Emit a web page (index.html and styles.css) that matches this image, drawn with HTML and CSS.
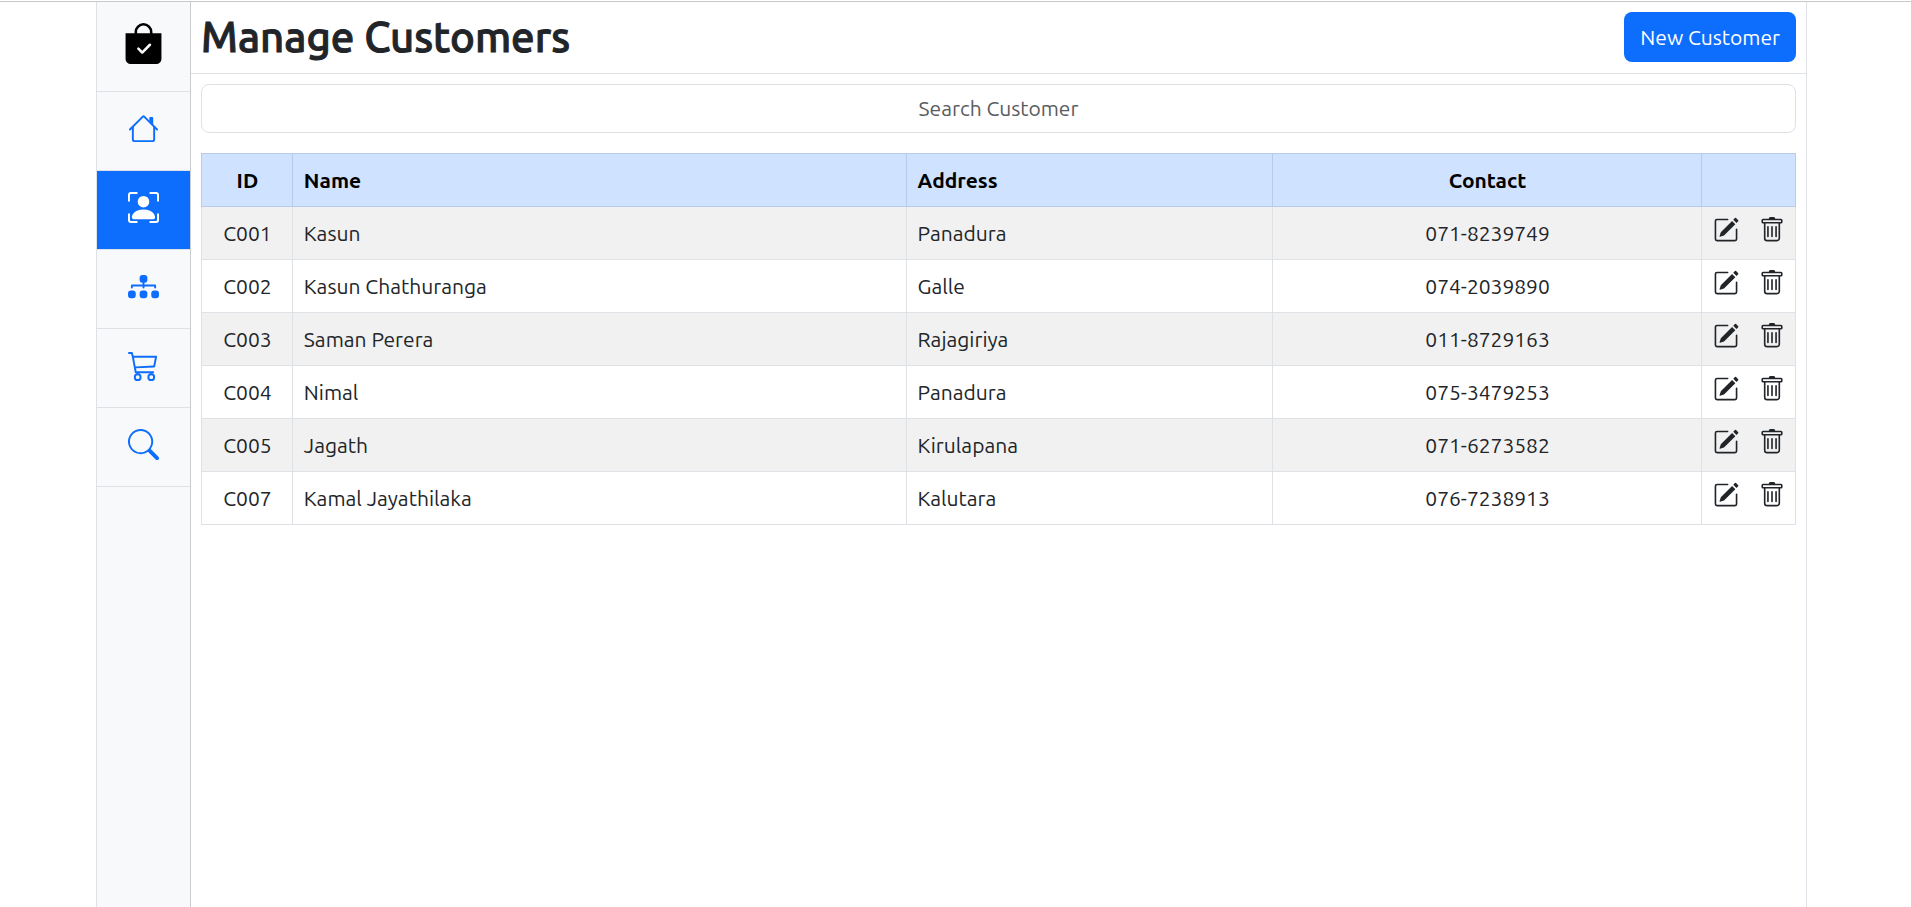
FILE: index.html
```html
<!DOCTYPE html>
<html lang="en">
<head>
<meta charset="utf-8">
<title>Manage Customers</title>
<link rel="stylesheet" href="styles.css">
</head>
<body>
<svg class="sprite" aria-hidden="true">
  <symbol id="pencil" viewBox="0 0 16 16"><path d="M15.502 1.94a.5.5 0 0 1 0 .706L14.459 3.69l-2-2L13.502.646a.5.5 0 0 1 .707 0l1.293 1.293zm-1.75 2.456-2-2L4.939 9.21a.5.5 0 0 0-.121.196l-.805 2.414a.25.25 0 0 0 .316.316l2.414-.805a.5.5 0 0 0 .196-.12l6.813-6.814z"/><path fill-rule="evenodd" d="M1 13.5A1.5 1.5 0 0 0 2.5 15h11a1.5 1.5 0 0 0 1.5-1.5v-6a.5.5 0 0 0-1 0v6a.5.5 0 0 1-.5.5h-11a.5.5 0 0 1-.5-.5v-11a.5.5 0 0 1 .5-.5H9a.5.5 0 0 0 0-1H2.500A1.500 1.500 0 0 0 1 2.500v11z"/></symbol>
  <symbol id="trash" viewBox="0 0 16 16"><path d="M5.500 5.500A.5.5 0 0 1 6 6v6a.5.5 0 0 1-1 0V6a.5.5 0 0 1 .5-.5zm2.500 0a.5.5 0 0 1 .5.5v6a.5.5 0 0 1-1 0V6a.5.5 0 0 1 .5-.5zm3 .5a.5.5 0 0 0-1 0v6a.5.5 0 0 0 1 0V6z"/><path fill-rule="evenodd" d="M14.500 3a1 1 0 0 1-1 1H13v9a2 2 0 0 1-2 2H5a2 2 0 0 1-2-2V4h-.5a1 1 0 0 1-1-1V2a1 1 0 0 1 1-1H6a1 1 0 0 1 1-1h2a1 1 0 0 1 1 1h3.500a1 1 0 0 1 1 1v1zM4.118 4 4 4.059V13a1 1 0 0 0 1 1h6a1 1 0 0 0 1-1V4.059L11.882 4H4.118zM2.500 3V2h11v1h-11z"/></symbol>
</svg>
<div class="app">
  <nav class="sidebar" aria-label="Main">
    <div class="logo">
      <svg viewBox="0 0 16 16" aria-hidden="true"><path fill-rule="evenodd" d="M10.500 3.500a2.500 2.500 0 0 0-5 0V4h5v-.5zm1 0V4H15v10a2 2 0 0 1-2 2H3a2 2 0 0 1-2-2V4h3.500v-.5a3.500 3.500 0 1 1 7 0zm-.646 5.354a.5.5 0 0 0-.708-.708L7.500 10.793 6.354 9.646a.5.5 0 1 0-.708.708l1.500 1.500a.5.5 0 0 0 .708 0l3-3z"/></svg>
    </div>
    <a class="nav-item" href="#home" aria-label="Home"><svg viewBox="0 0 16 16"><path fill-rule="evenodd" d="M2 13.500V7h1v6.500a.5.5 0 0 0 .5.5h9a.5.5 0 0 0 .5-.5V7h1v6.500a1.500 1.500 0 0 1-1.500 1.500h-9A1.500 1.500 0 0 1 2 13.500zm11-11V6l-2-2V2.500a.5.5 0 0 1 .5-.5h1a.5.5 0 0 1 .5.5z"/><path fill-rule="evenodd" d="M7.293 1.500a1 1 0 0 1 1.414 0l6.647 6.646a.5.5 0 0 1-.708.708L8 2.207 1.354 8.854a.5.5 0 1 1-.708-.708L7.293 1.500z"/></svg></a>
    <a class="nav-item active" href="#customers" aria-label="Customers" aria-current="page"><svg viewBox="0 0 16 16"><path d="M1.500 1a.5.5 0 0 0-.5.5v3a.5.5 0 0 1-1 0v-3A1.500 1.500 0 0 1 1.500 0h3a.5.5 0 0 1 0 1h-3zM11 .5a.5.5 0 0 1 .5-.5h3A1.500 1.500 0 0 1 16 1.500v3a.5.5 0 0 1-1 0v-3a.5.5 0 0 0-.5-.5h-3a.5.5 0 0 1-.5-.5zM.5 11a.5.5 0 0 1 .5.5v3a.5.5 0 0 0 .5.5h3a.5.5 0 0 1 0 1h-3A1.500 1.500 0 0 1 0 14.500v-3a.5.5 0 0 1 .5-.5zm15 0a.5.5 0 0 1 .5.5v3a1.500 1.500 0 0 1-1.500 1.500h-3a.5.5 0 0 1 0-1h3a.5.5 0 0 0 .5-.5v-3a.5.5 0 0 1 .5-.5z"/><path d="M3 14s-1 0-1-1 1-4 6-4 6 3 6 4-1 1-1 1H3zm8-9a3 3 0 1 1-6 0 3 3 0 0 1 6 0z"/></svg></a>
    <a class="nav-item" href="#items" aria-label="Items"><svg viewBox="0 0 16 16"><path fill-rule="evenodd" d="M6 3.500A1.500 1.500 0 0 1 7.500 2h1A1.500 1.500 0 0 1 10 3.500v1A1.500 1.500 0 0 1 8.500 6v1H14a.5.5 0 0 1 .5.5v1a.5.5 0 0 1-1 0V8h-5v.5a.5.5 0 0 1-1 0V8h-5v.5a.5.5 0 0 1-1 0v-1A.5.5 0 0 1 2 7h5.500V6A1.500 1.500 0 0 1 6 4.500v-1zm-6 8A1.500 1.500 0 0 1 1.500 10h1A1.500 1.500 0 0 1 4 11.500v1A1.500 1.500 0 0 1 2.500 14h-1A1.500 1.500 0 0 1 0 12.500v-1zm6 0A1.500 1.500 0 0 1 7.500 10h1a1.500 1.500 0 0 1 1.500 1.500v1A1.500 1.500 0 0 1 8.500 14h-1A1.500 1.500 0 0 1 6 12.500v-1zm6 0a1.500 1.500 0 0 1 1.500-1.500h1a1.500 1.500 0 0 1 1.500 1.500v1a1.500 1.500 0 0 1-1.500 1.500h-1a1.500 1.500 0 0 1-1.500-1.500v-1z"/></svg></a>
    <a class="nav-item" href="#orders" aria-label="Orders"><svg viewBox="0 0 16 16"><path d="M0 1.500A.5.5 0 0 1 .5 1H2a.5.5 0 0 1 .485.379L2.890 3H14.500a.5.5 0 0 1 .49.598l-1 5a.5.5 0 0 1-.465.401l-9.397.472L4.415 11H13a.5.5 0 0 1 0 1H4a.5.5 0 0 1-.491-.408L2.010 3.607 1.610 2H.5a.5.5 0 0 1-.5-.5zM3.102 4l.84 4.479 9.144-.459L13.890 4H3.102zM5 12a2 2 0 1 0 0 4 2 2 0 0 0 0-4zm7 0a2 2 0 1 0 0 4 2 2 0 0 0 0-4zm-7 1a1 1 0 1 1 0 2 1 1 0 0 1 0-2zm7 0a1 1 0 1 1 0 2 1 1 0 0 1 0-2z"/></svg></a>
    <a class="nav-item" href="#search" aria-label="Search orders"><svg viewBox="0 0 16 16"><path d="M11.742 10.344a6.500 6.500 0 1 0-1.397 1.398h-.001c.03.04.062.078.098.115l3.850 3.850a1 1 0 0 0 1.415-1.414l-3.850-3.850a1.007 1.007 0 0 0-.115-.1zM12 6.500a5.500 5.500 0 1 1-11 0 5.500 5.500 0 0 1 11 0z"/></svg></a>
  </nav>
  <main class="main">
    <header class="header">
      <h1 class="title">Manage Customers</h1>
      <button class="new-button" type="button">New Customer</button>
    </header>
    <div class="content">
      <input class="search" type="text" placeholder="Search Customer" aria-label="Search Customer">
      <table class="customers">
        <colgroup><col class="col-id"><col class="col-name"><col class="col-address"><col class="col-contact"><col class="col-actions"></colgroup>
        <thead>
          <tr><th class="center">ID</th><th>Name</th><th>Address</th><th class="center">Contact</th><th></th></tr>
        </thead>
        <tbody>
          <tr><td class="center">C001</td><td>Kasun</td><td>Panadura</td><td class="center">071-8239749</td><td><div class="actions"><button class="icon-button" type="button" aria-label="Edit C001"><svg><use href="#pencil"/></svg></button><button class="icon-button" type="button" aria-label="Delete C001"><svg><use href="#trash"/></svg></button></div></td></tr>
          <tr><td class="center">C002</td><td>Kasun Chathuranga</td><td>Galle</td><td class="center">074-2039890</td><td><div class="actions"><button class="icon-button" type="button" aria-label="Edit C002"><svg><use href="#pencil"/></svg></button><button class="icon-button" type="button" aria-label="Delete C002"><svg><use href="#trash"/></svg></button></div></td></tr>
          <tr><td class="center">C003</td><td>Saman Perera</td><td>Rajagiriya</td><td class="center">011-8729163</td><td><div class="actions"><button class="icon-button" type="button" aria-label="Edit C003"><svg><use href="#pencil"/></svg></button><button class="icon-button" type="button" aria-label="Delete C003"><svg><use href="#trash"/></svg></button></div></td></tr>
          <tr><td class="center">C004</td><td>Nimal</td><td>Panadura</td><td class="center">075-3479253</td><td><div class="actions"><button class="icon-button" type="button" aria-label="Edit C004"><svg><use href="#pencil"/></svg></button><button class="icon-button" type="button" aria-label="Delete C004"><svg><use href="#trash"/></svg></button></div></td></tr>
          <tr><td class="center">C005</td><td>Jagath</td><td>Kirulapana</td><td class="center">071-6273582</td><td><div class="actions"><button class="icon-button" type="button" aria-label="Edit C005"><svg><use href="#pencil"/></svg></button><button class="icon-button" type="button" aria-label="Delete C005"><svg><use href="#trash"/></svg></button></div></td></tr>
          <tr><td class="center">C007</td><td>Kamal Jayathilaka</td><td>Kalutara</td><td class="center">076-7238913</td><td><div class="actions"><button class="icon-button" type="button" aria-label="Edit C007"><svg><use href="#pencil"/></svg></button><button class="icon-button" type="button" aria-label="Delete C007"><svg><use href="#trash"/></svg></button></div></td></tr>
        </tbody>
      </table>
    </div>
  </main>
</div>
</body>
</html>
```
FILE: styles.css
```css
* { box-sizing: border-box; }

body {
  margin: 0;
  padding-top: 1px;
  min-height: 100vh;
  display: flex;
  background: #fff;
  color: #212529;
  font: 21px/32px Ubuntu, "Noto Sans", "Open Sans", sans-serif;
}

svg { display: block; fill: currentColor; }
.sprite { display: none; }

.app {
  flex: 1;
  display: flex;
  padding: 0 104px 0 96px;
  border-top: 1px solid #c7c9c8;
}

.sidebar {
  flex: none;
  width: 95px;
  background: #f8f9fa;
  border-left: 1px solid #dee2e6;
  border-right: 1px solid #c9cbcd;
}

.logo {
  display: flex;
  justify-content: center;
  padding: 21px 0 27px;
  border-bottom: 1px solid #dee2e6;
  color: #000;
}
.logo svg { width: 41px; height: 41px; }

.nav-item {
  display: flex;
  justify-content: center;
  padding: 21px 0 26px;
  border-bottom: 1px solid #dee2e6;
  color: #0d6efd;
}
.nav-item svg { width: 31px; height: 31px; }
.nav-item.active { background: #0d6efd; background-clip: padding-box; color: #fff; }

.main {
  flex: 1;
  border-right: 1px solid #dee2e6;
}

.header {
  display: flex;
  justify-content: space-between;
  align-items: center;
  padding: 10px 10px 11px;
  border-bottom: 1px solid #dee2e6;
}

.title {
  margin: 0;
  font-size: 42px;
  line-height: 50px;
  font-weight: 500;
  -webkit-text-stroke: 1px currentColor;
}

.new-button {
  padding: 9px 16px;
  border: 0;
  border-radius: 8px;
  background: #0d6efd;
  color: #fff;
  font: inherit;
}

.content { padding: 10px; }

.search {
  display: block;
  width: 100%;
  height: 49px;
  margin-bottom: 20px;
  padding: 7px 16px 9px;
  border: 1px solid #dee2e6;
  border-radius: 8px;
  background: #fff;
  color: inherit;
  font: inherit;
  text-align: center;
}
.search::placeholder { color: #595c5f; opacity: 1; }

.customers {
  width: 100%;
  table-layout: fixed;
  border-collapse: collapse;
}
.col-id { width: 5.7%; }
.col-name { width: 38.5%; }
.col-address { width: 23%; }
.col-contact { width: 26.9%; }
.col-actions { width: 5.9%; }

.customers th,
.customers td {
  height: 53px;
  padding: 10px 10px 10px 11px;
  border: 1px solid #dee2e6;
  text-align: left;
}
.customers th {
  border-color: #bacbe6;
  background: #cfe2ff;
  color: #000;
  font-weight: 700;
}
.customers tbody tr:nth-child(odd) { background: #f1f1f1; }
.customers .center { text-align: center; }

.actions { display: flex; justify-content: space-between; height: 32px; }
.icon-button {
  width: 26px;
  height: 26px;
  padding: 0;
  border: 0;
  background: none;
  color: inherit;
}
.icon-button svg { width: 26px; height: 26px; }
```
